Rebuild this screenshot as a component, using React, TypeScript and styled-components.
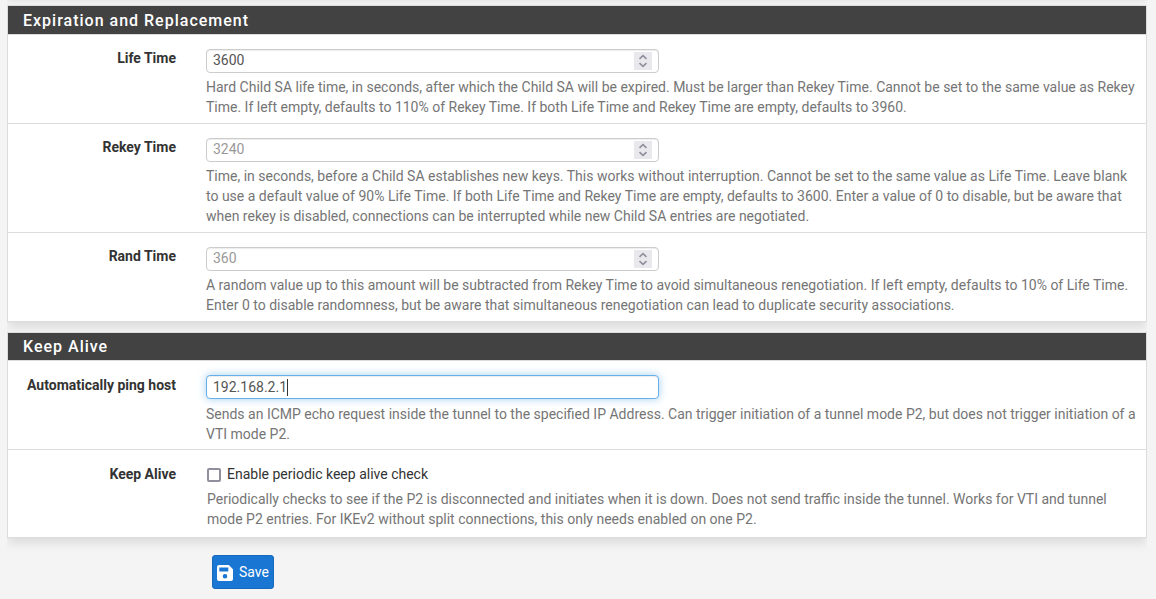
import React from "react";
import styled, { createGlobalStyle, css } from "styled-components";

const GlobalStyle = createGlobalStyle`
  *, *::before, *::after { box-sizing: border-box; }
  html, body { margin: 0; background: #f4f4f4; }
  body {
    font: 14px/20px Roboto, "Liberation Sans", sans-serif;
    color: #333;
    overflow: hidden;
  }
`;

const Page = styled.main`
  width: 1140px;
  margin-left: 7px;
`;

const panelShadow = css`
  box-shadow: 0 5px 10px rgba(0, 0, 0, 0.1);
  clip-path: inset(0 0 -20px 0);
`;

const PreviousPanelEdge = styled.div`
  height: 20px;
  margin: -25px 0 10px;
  ${panelShadow}
`;

const Panel = styled.section`
  margin-bottom: 10px;
  background: #fff;
  border: 1px solid #dcdcdc;
  ${panelShadow}
`;

const PanelTitle = styled.h2<{ $height: number }>`
  height: ${(p) => p.$height}px;
  margin: 0;
  padding: ${(p) => p.$height - 27}px 15px 0;
  background: #424242;
  color: #fff;
  font-size: 16px;
  font-weight: 500;
  line-height: 28px;
  letter-spacing: 1px;
`;

const Row = styled.div<{ $compact?: boolean }>`
  display: grid;
  grid-template-columns: 168px 1fr;
  column-gap: 30px;
  padding: ${(p) => (p.$compact ? "14px 8px 8px 0" : "13px 8px 6px 0")};
  border-top: 1px solid #dcdcdc;
`;

const HostRow = styled(Row)`
  padding-top: 14px;
  padding-bottom: 5px;
`;

const Label = styled.label`
  text-align: right;
  font-weight: 700;
  white-space: nowrap;
`;

const Field = styled.div<{ $compact?: boolean }>`
  padding: ${(p) => (p.$compact ? "0 0 0 1px" : "1px 0 0")};
`;

const HostField = styled(Field)`
  padding-top: 0;
`;

const InputBox = styled.div<{ $focused?: boolean }>`
  display: flex;
  align-items: center;
  justify-content: space-between;
  width: 453px;
  height: 24px;
  padding: 0 6px;
  border: 1px solid ${(p) => (p.$focused ? "#66afe9" : "#ccc")};
  border-radius: 4px;
  background: #fff;
  box-shadow: ${(p) =>
    p.$focused
      ? "inset 0 1px 1px rgba(0,0,0,.075), 0 0 8px rgba(102,175,233,.6)"
      : "inset 0 1px 1px rgba(0,0,0,.075)"};
`;

const Value = styled.span<{ $muted?: boolean; $number?: boolean }>`
  display: flex;
  align-items: center;
  padding-bottom: ${(p) => (p.$number ? 2 : 0)}px;
  color: ${(p) => (p.$muted ? "#999" : "#555")};
`;

const Caret = styled.i`
  width: 1px;
  height: 17px;
  background: #333;
`;

const Spinner = styled.span`
  display: flex;
  align-items: center;
  justify-content: center;
  width: 18px;
  height: 18px;
  background: #e9e9ed;
`;

const Help = styled.p<{ $gap?: number }>`
  margin: ${(p) => p.$gap ?? 4}px 0 0;
  color: #757575;
`;

const CheckLine = styled.div`
  display: flex;
  align-items: center;
  gap: 6px;
`;

const Checkbox = styled.span`
  width: 14px;
  height: 14px;
  margin-top: 2px;
  border: 2px solid #8f8f9d;
  border-radius: 2px;
  background: #fff;
`;

const SaveButton = styled.button`
  display: flex;
  align-items: center;
  gap: 6px;
  width: 62px;
  height: 34px;
  margin: 17px 0 0 205px;
  padding: 0 4px;
  border: 1px solid #1769bc;
  border-radius: 3px;
  background: #1976d2;
  color: #fff;
  font: inherit;

  svg { margin-top: 2px; }
`;

function SpinButtons() {
  return (
    <Spinner>
      <svg width="18" height="18" viewBox="0 0 18 18" fill="none" stroke="#8f8f9d" strokeWidth="1.6">
        <path d="M5.5 6.8 9 3.6l3.5 3.2M5.5 11.2 9 14.4l3.5-3.2" />
      </svg>
    </Spinner>
  );
}

interface NumberRowProps {
  label: string;
  value: string;
  muted?: boolean;
  children: React.ReactNode;
}

function NumberRow({ label, value, muted, children }: NumberRowProps) {
  return (
    <Row>
      <Label>{label}</Label>
      <Field>
        <InputBox>
          <Value $muted={muted} $number>{value}</Value>
          <SpinButtons />
        </InputBox>
        <Help>{children}</Help>
      </Field>
    </Row>
  );
}

export default function App() {
  return (
    <>
      <GlobalStyle />
      <Page>
        <PreviousPanelEdge />
        <Panel>
          <PanelTitle $height={28}>Expiration and Replacement</PanelTitle>
          <NumberRow label="Life Time" value="3600">
            Hard Child SA life time, in seconds, after which the Child SA will be expired. Must be larger than Rekey Time. Cannot be set to the same value as Rekey Time. If left empty, defaults to 110% of Rekey Time. If both Life Time and Rekey Time are empty, defaults to 3960.
          </NumberRow>
          <NumberRow label="Rekey Time" value="3240" muted>
            Time, in seconds, before a Child SA establishes new keys. This works without interruption. Cannot be set to the same value as Life Time. Leave blank to use a default value of 90% Life Time. If both Life Time and Rekey Time are empty, defaults to 3600. Enter a value of 0 to disable, but be aware that when rekey is disabled, connections can be interrupted while new Child SA entries are negotiated.
          </NumberRow>
          <NumberRow label="Rand Time" value="360" muted>
            A random value up to this amount will be subtracted from Rekey Time to avoid simultaneous renegotiation. If left empty, defaults to 10% of Life Time. Enter 0 to disable randomness, but be aware that simultaneous renegotiation can lead to duplicate security associations.
          </NumberRow>
        </Panel>
        <Panel>
          <PanelTitle $height={27}>Keep Alive</PanelTitle>
          <HostRow>
            <Label>Automatically ping host</Label>
            <HostField>
              <InputBox $focused>
                <Value>192.168.2.1<Caret /></Value>
              </InputBox>
              <Help $gap={5}>
                Sends an ICMP echo request inside the tunnel to the specified IP Address. Can trigger initiation of a tunnel mode P2, but does not trigger initiation of a VTI mode P2.
              </Help>
            </HostField>
          </HostRow>
          <Row $compact>
            <Label>Keep Alive</Label>
            <Field $compact>
              <CheckLine>
                <Checkbox />
                Enable periodic keep alive check
              </CheckLine>
              <Help $gap={5}>
                Periodically checks to see if the P2 is disconnected and initiates when it is down. Does not send traffic inside the tunnel. Works for VTI and tunnel mode P2 entries. For IKEv2 without split connections, this only needs enabled on one P2.
              </Help>
            </Field>
          </Row>
        </Panel>
        <SaveButton>
          <svg width="16" height="16" viewBox="0 0 16 16" fill="#fff" fillRule="evenodd">
            <path d="M2 0h9.8L16 4.2V14a2 2 0 0 1-2 2H2a2 2 0 0 1-2-2V2a2 2 0 0 1 2-2zM2.3 2.5v4h9v-4zM8 9a2.3 2.3 0 1 0 0 4.6A2.3 2.3 0 0 0 8 9z" />
          </svg>
          Save
        </SaveButton>
      </Page>
    </>
  );
}
